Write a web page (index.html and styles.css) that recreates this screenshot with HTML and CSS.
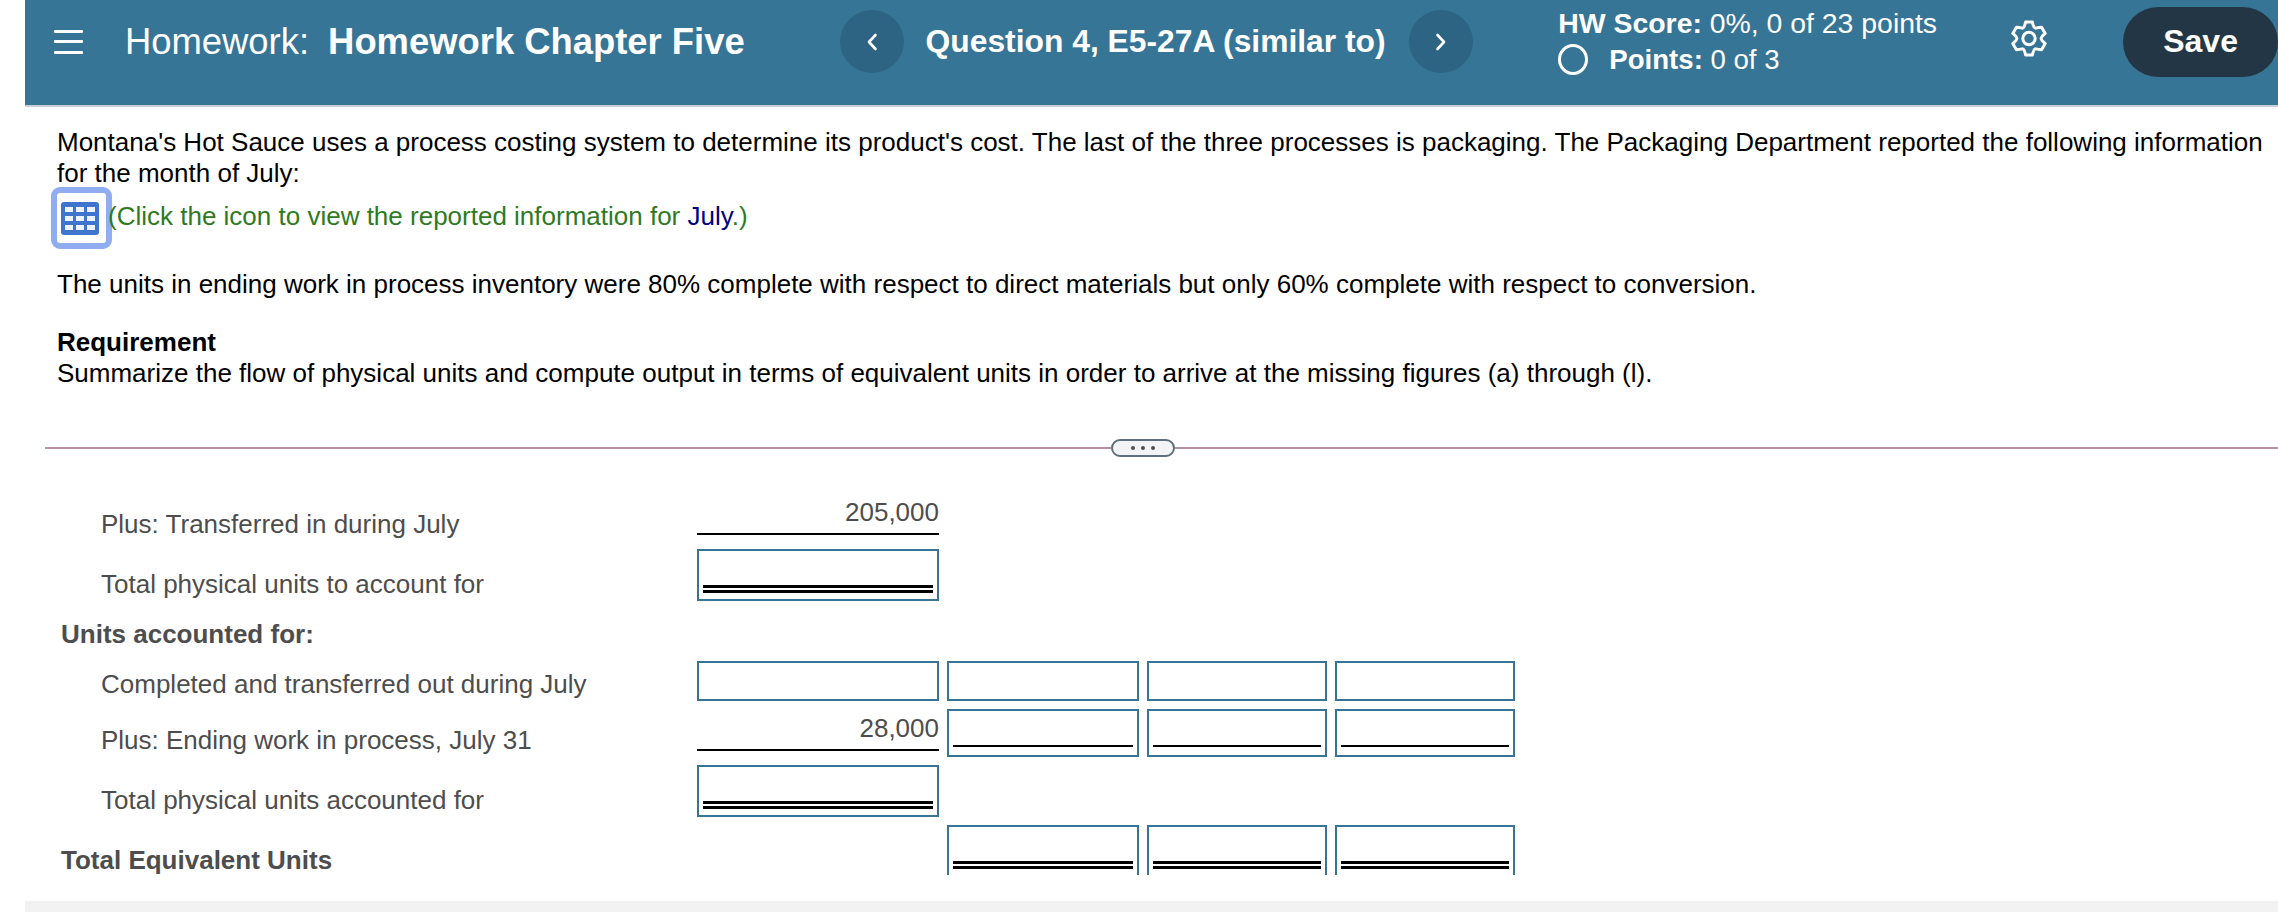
FILE: index.html
```html
<!DOCTYPE html>
<html lang="en">
<head>
    <meta charset="UTF-8">
    <title>Homework Chapter Five</title>
    <link rel="stylesheet" href="styles.css">
</head>
<body>
    <div class="page">
        <header class="top-bar">
            <div class="menu-btn"><span></span><span></span><span></span></div>
            <h1 class="hw-title">Homework: <b>Homework Chapter Five</b></h1>
            <div class="nav-btn nav-prev">
                <svg width="12" height="20" viewBox="0 0 12 20"><path d="M9.5 3 L3 10 L9.5 17" fill="none" stroke="#fff" stroke-width="2.6" stroke-linecap="round" stroke-linejoin="round"/></svg>
            </div>
            <div class="question-name">Question 4, E5-27A (similar to)</div>
            <div class="nav-btn nav-next">
                <svg width="12" height="20" viewBox="0 0 12 20"><path d="M2.5 3 L9 10 L2.5 17" fill="none" stroke="#fff" stroke-width="2.6" stroke-linecap="round" stroke-linejoin="round"/></svg>
            </div>
            <div class="score-box">
                <div class="score-line"><b>HW Score:</b> 0%, 0 of 23 points</div>
                <div class="points-line"><span class="ring"></span><span><b>Points:</b> 0 of 3</span></div>
            </div>
            <svg class="gear" width="36" height="37" viewBox="0 0 36 36">
                <path d="M14.6 1.6 L21.4 1.6 Q22.8 8 25 7.6 Q27.5 7 30.6 6.8 L34.2 12.9 Q30 16.5 30.2 18 Q30 19.5 34.2 23.1 L30.6 29.2 Q27.5 29 25 28.4 Q22.8 28 21.4 34.4 L14.6 34.4 Q13.2 28 11 28.4 Q8.5 29 5.4 29.2 L1.8 23.1 Q6 19.5 5.8 18 Q6 16.5 1.8 12.9 L5.4 6.8 Q8.5 7 11 7.6 Q13.2 8 14.6 1.6 Z" fill="none" stroke="#fff" stroke-width="3" stroke-linejoin="round"/>
                <circle cx="18" cy="18" r="6.2" fill="none" stroke="#fff" stroke-width="3"/>
            </svg>
            <div class="save-btn">Save</div>
        </header>

        <section class="question">
            <p class="intro">Montana's Hot Sauce uses a process costing system to determine its product's cost. The last of the three processes is packaging. The Packaging Department reported the following information for the month of July:</p>
            <div class="info-row">
                <div class="table-icon">
                    <svg width="38" height="33" viewBox="0 0 38 33">
                        <rect width="38" height="33" rx="3" fill="#3f74cf"/>
                        <g fill="#eef3fb">
                            <rect x="4" y="5" width="8" height="5"/><rect x="15" y="5" width="8" height="5"/><rect x="26" y="5" width="8" height="5"/>
                            <rect x="4" y="14" width="8" height="5"/><rect x="15" y="14" width="8" height="5"/><rect x="26" y="14" width="8" height="5"/>
                            <rect x="4" y="23" width="8" height="5"/><rect x="15" y="23" width="8" height="5"/><rect x="26" y="23" width="8" height="5"/>
                        </g>
                    </svg>
                </div>
                <span class="info-text">(Click the icon to view the reported information for <span class="info-link">July</span>.)</span>
            </div>
            <p class="units-note">The units in ending work in process inventory were 80% complete with respect to direct materials but only 60% complete with respect to conversion.</p>
            <p class="requirement"><b>Requirement</b><br>Summarize the flow of physical units and compute output in terms of equivalent units in order to arrive at the missing figures (a) through (l).</p>
        </section>

        <div class="divider">
            <span class="divider-line first"></span>
            <span class="more-pill"><i></i><i></i><i></i></span>
            <span class="divider-line"></span>
        </div>

        <div class="units-grid">
            <div class="label indent">Plus: Transferred in during July</div>
            <div class="value">205,000</div>
            <div></div><div></div><div></div>

            <div class="label indent">Total physical units to account for</div>
            <div class="entry"><div class="rule-double"></div></div>
            <div></div><div></div><div></div>

            <div class="label heading accounted">Units accounted for:</div>
            <div></div><div></div><div></div><div></div>

            <div class="label indent">Completed and transferred out during July</div>
            <div class="entry"></div>
            <div class="entry"></div>
            <div class="entry"></div>
            <div class="entry"></div>

            <div class="label indent">Plus: Ending work in process, July 31</div>
            <div class="value">28,000</div>
            <div class="entry single"><div class="rule-single"></div></div>
            <div class="entry single"><div class="rule-single"></div></div>
            <div class="entry single"><div class="rule-single"></div></div>

            <div class="label indent">Total physical units accounted for</div>
            <div class="entry"><div class="rule-double"></div></div>
            <div></div><div></div><div></div>

            <div class="label heading">Total Equivalent Units</div>
            <div></div>
            <div class="entry cut"><div class="rule-double"></div></div>
            <div class="entry cut"><div class="rule-double"></div></div>
            <div class="entry cut"><div class="rule-double"></div></div>
        </div>

        <div class="bottom-bar"></div>
    </div>
</body>
</html>
```

FILE: styles.css
```css
html, body {
    margin: 0;
    height: 912px;
    overflow: hidden;
    background: #fff;
}

body {
    font-family: "Liberation Sans", Arial, sans-serif;
    font-size: 26px;
    color: #000;
}

.page {
    margin-left: 25px;
    position: relative;
    height: 912px;
}

/* header */
.top-bar {
    display: flex;
    align-items: center;
    height: 105px;
    background: #367595;
    border-bottom: 2px solid #c8d0d8;
    color: #fff;
}

.menu-btn {
    display: flex;
    flex-direction: column;
    justify-content: space-between;
    width: 29px;
    height: 24px;
    margin: -22px 43px 0 29px;
}

.menu-btn span {
    display: block;
    height: 3px;
    background: #fff;
    border-radius: 1px;
}

.hw-title {
    margin: -22px 0 0 -1px;
    width: 715px;
    font-size: 36.4px;
    font-weight: normal;
    white-space: nowrap;
}

.hw-title b {
    margin-left: 9px;
}

.nav-btn {
    display: flex;
    align-items: center;
    justify-content: center;
    width: 64px;
    height: 63px;
    margin-top: -22px;
    border-radius: 50%;
    background: #2e6483;
}

.question-name {
    width: 506px;
    padding-left: 22px;
    box-sizing: border-box;
    margin-top: -23px;
    font-size: 31.8px;
    font-weight: bold;
    white-space: nowrap;
}

.score-box {
    width: 453px;
    margin: -22px 0 0 85px;
    font-size: 28.4px;
}

.score-line {
    line-height: 36px;
}

.points-line {
    display: flex;
    align-items: center;
    gap: 21px;
    font-size: 27.6px;
    line-height: 38px;
}

.ring {
    width: 24px;
    height: 25px;
    border: 3px solid #fff;
    border-radius: 50%;
}

.gear {
    margin-top: -29px;
}

.save-btn {
    display: flex;
    align-items: center;
    justify-content: center;
    width: 155px;
    height: 70px;
    margin: -22px 0 0 76px;
    border-radius: 35px;
    background: #233645;
    font-size: 32px;
    font-weight: bold;
}

/* question text */
.question {
    padding: 20px 14px 0 32px;
    line-height: 31px;
}

.question p {
    margin: 0;
}

.info-row {
    display: flex;
    align-items: center;
    margin-top: 4px;
    height: 50px;
}

.table-icon {
    display: flex;
    align-items: center;
    justify-content: center;
    width: 49px;
    height: 50px;
    padding-right: 3px;
    box-sizing: border-box;
    outline: 6px solid #8fadf0;
    border-radius: 3px;
}

.table-icon svg {
    filter: blur(0.6px);
}

.info-text {
    margin: -4px 0 0 2px;
    color: #2f7a1f;
}

.info-link {
    color: #000080;
}

.question .units-note {
    margin-top: 26px;
}

.question .requirement {
    margin-top: 27px;
}

/* separator */
.divider {
    display: flex;
    align-items: center;
    height: 18px;
    margin: 50px 0 0 20px;
}

.divider-line {
    flex: 1;
    height: 2px;
    background: #b88fa3;
}

.divider-line.first {
    flex: none;
    width: 1066px;
}

.more-pill {
    display: flex;
    align-items: center;
    justify-content: center;
    gap: 6px;
    width: 64px;
    height: 18px;
    box-sizing: border-box;
    border: 2px solid #5f6f7e;
    border-radius: 9px;
    background: #f2f4f7;
}

.more-pill i {
    width: 4px;
    height: 4px;
    border-radius: 50%;
    background: #4d4d4d;
}

/* units table */
.units-grid {
    display: grid;
    grid-template-columns: 644px 242px 192px 180px 180px;
    grid-template-rows: 51px 52px 44px 40px 48px 52px 50px;
    gap: 8px;
    margin: 33px 0 0 20px;
    color: #4d4d4d;
}

.label {
    align-self: end;
    padding-bottom: 2px;
    line-height: 30px;
}

.label.indent {
    padding-left: 56px;
}

.label.heading {
    padding-left: 16px;
    padding-bottom: 0;
    font-weight: bold;
}

.label.heading.accounted {
    padding-bottom: 4px;
}

.value {
    align-self: end;
    margin-bottom: 6px;
    padding-bottom: 6px;
    border-bottom: 2px solid #000;
    line-height: 30px;
    text-align: right;
}

.entry {
    display: flex;
    flex-direction: column;
    justify-content: flex-end;
    padding: 0 4px 6px;
    box-sizing: border-box;
    border: 2px solid #367595;
    background: #fff;
}

.entry.single {
    padding-bottom: 8px;
}

.entry.cut {
    border-bottom: none;
}

.rule-double {
    border-bottom: 8px double #000;
}

.rule-single {
    border-bottom: 2px solid #000;
}

.bottom-bar {
    position: absolute;
    left: 0;
    right: 0;
    top: 901px;
    height: 11px;
    background: #f2f2f2;
}
```
